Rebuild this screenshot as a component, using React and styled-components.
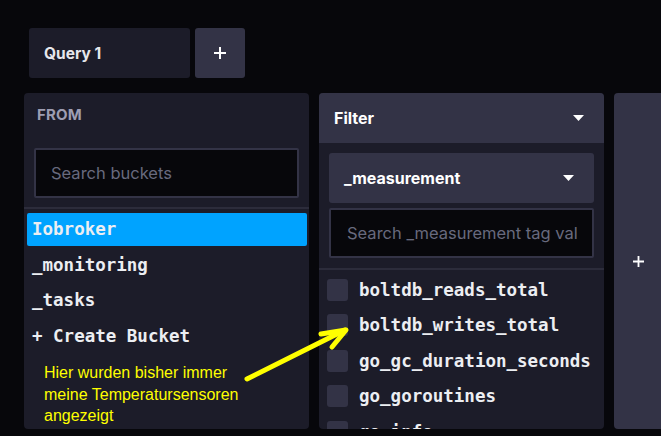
import React from 'react'
import styled, { createGlobalStyle } from 'styled-components'

const bg = '#07070b'
const panel = '#1c1c29'
const raised = '#333346'
const sans = '"Inter", "Liberation Sans", sans-serif'
const mono = '"DejaVu Sans Mono", "Liberation Mono", monospace'

const Global = createGlobalStyle`
  html, body { margin: 0; background: ${bg}; }
  body { font-family: ${sans}; -webkit-font-smoothing: antialiased; }
`

// Page
const Page = styled.div`
  position: relative;
  width: 661px;
  height: 436px;
  overflow: hidden;
  padding: 28px 0 0 24px;
  box-sizing: border-box;
`

// Query tabs
const Tabs = styled.div`
  display: flex;
  gap: 5px;
  margin-left: 5px;
  height: 50px;
`
const QueryTab = styled.div`
  width: 161px;
  background: ${panel};
  border-radius: 3px;
  color: #e6e7ec;
  font-weight: 700;
  font-size: 15.5px;
  display: flex;
  align-items: center;
  padding-left: 15px;
  box-sizing: border-box;
`
const AddTab = styled.div`
  width: 50px;
  background: ${raised};
  border-radius: 3px;
  display: flex;
  align-items: center;
  justify-content: center;
`

// Panels
const Panels = styled.div`
  display: flex;
  gap: 10px;
  margin-top: 15px;
  height: 336px;
`
const Card = styled.div`
  width: ${({ w }) => w || '285px'};
  flex-shrink: 0;
  background: ${({ tone }) => tone || panel};
  border-radius: 4px;
  display: flex;
  flex-direction: column;
  overflow: hidden;
`
const FromLabel = styled.div`
  color: #9d9db2;
  font-weight: 700;
  font-size: 15px;
  letter-spacing: 0.2px;
  padding: 12px 0 0 13px;
  height: 42px;
  box-sizing: border-box;
`
const SearchBox = styled.div`
  margin: ${({ m }) => m};
  height: 50px;
  background: ${bg};
  border: 2px solid ${raised};
  border-radius: 2px;
  box-sizing: border-box;
  color: #686a7e;
  font-size: 16.5px;
  display: flex;
  align-items: center;
  padding: 0 15px 0 ${({ pl }) => pl || '15px'};
`
const Placeholder = styled.span`
  flex: 1;
  white-space: nowrap;
  overflow: hidden;
`
const Divider = styled.div`
  height: 2px;
  background: #2c2c3b;
  margin-top: ${({ mt }) => mt};
`
const List = styled.div`
  flex: 1;
  overflow: hidden;
  padding: ${({ p }) => p};
`
const Bucket = styled.div`
  height: 32.5px;
  margin-bottom: 3px;
  border-radius: 2px;
  background: ${({ active }) => (active ? '#00a3ff' : 'transparent')};
  color: #eceef2;
  font-family: ${mono};
  font-weight: 700;
  font-size: 17.5px;
  display: flex;
  align-items: center;
  padding-left: 5px;
`
const Note = styled.div`
  margin: 10px 0 0 17px;
  color: #ffff00;
  font-family: "Liberation Sans", sans-serif;
  font-size: 16px;
  line-height: 21.5px;
  width: 215px;
`

// Filter
const FilterHead = styled.div`
  height: 50px;
  background: ${raised};
  display: flex;
  align-items: center;
  justify-content: space-between;
  padding: 0 20px 0 15px;
  color: #fff;
  font-weight: 700;
  font-size: 16px;
  flex-shrink: 0;
`
const Dropdown = styled.div`
  margin: 10px 10px 5px;
  height: 50px;
  background: ${raised};
  border-radius: 3px;
  display: flex;
  align-items: center;
  justify-content: space-between;
  padding: 0 20px 0 15px;
  color: #fff;
  font-weight: 700;
  font-size: 16px;
  flex-shrink: 0;
`
const TagRow = styled.div`
  height: 35.5px;
  display: flex;
  align-items: center;
  gap: 11px;
  color: #eceef2;
  font-family: ${mono};
  font-weight: 700;
  font-size: 17.5px;
  white-space: nowrap;
`
const Check = styled.span`
  width: 21px;
  height: 22px;
  border-radius: 3px;
  background: ${raised};
  flex-shrink: 0;
`
const AddColumn = styled.div`
  flex: 1;
  display: flex;
  align-items: center;
  padding-left: 19px;
`

const Arrow = styled.svg`
  position: absolute;
  left: 0;
  top: 0;
  pointer-events: none;
`

const Caret = () => (
  <svg width="11" height="6" viewBox="0 0 11 6"><path d="M0 0H11L5.5 6Z" fill="#fff" /></svg>
)
const Plus = ({ size = 12 }) => (
  <svg width={size} height={size} viewBox="0 0 12 12">
    <path d="M6 0V12M0 6H12" stroke="#fff" strokeWidth="2" />
  </svg>
)

const buckets = ['Iobroker', '_monitoring', '_tasks', '+ Create Bucket']
const tags = ['boltdb_reads_total', 'boltdb_writes_total', 'go_gc_duration_seconds', 'go_goroutines', 'go_info']

export default function App() {
  return (
    <>
      <Global />
      <Page>
        <Tabs>
          <QueryTab>Query 1</QueryTab>
          <AddTab><Plus /></AddTab>
        </Tabs>
        <Panels>
          <Card>
            <FromLabel>FROM</FromLabel>
            <SearchBox m="13px 10px 0"><Placeholder>Search buckets</Placeholder></SearchBox>
            <Divider mt="9px" />
            <List p="4px 2px 0 3px">
              {buckets.map((b, i) => (
                <Bucket key={b} active={i === 0}>{b}</Bucket>
              ))}
              <Note>Hier wurden bisher immer meine Temperatursensoren angezeigt</Note>
            </List>
          </Card>
          <Card>
            <FilterHead>Filter<Caret /></FilterHead>
            <Dropdown>_measurement<Caret /></Dropdown>
            <SearchBox m="0 10px" pl="16px"><Placeholder>Search _measurement tag values</Placeholder></SearchBox>
            <Divider mt="10px" />
            <List p="2px 0 0 8px">
              {tags.map(t => (
                <TagRow key={t}><Check />{t}</TagRow>
              ))}
            </List>
          </Card>
          <Card tone={raised} w="80px">
            <AddColumn><Plus size={11} /></AddColumn>
          </Card>
        </Panels>
        <Arrow width="661" height="436" viewBox="0 0 661 436">
          <g stroke="#ffff00" strokeWidth="5" strokeLinecap="round" strokeLinejoin="round" fill="none">
            <path d="M247 379L345 330" />
            <path d="M321 334L346 330L332 347" />
          </g>
        </Arrow>
      </Page>
    </>
  )
}
